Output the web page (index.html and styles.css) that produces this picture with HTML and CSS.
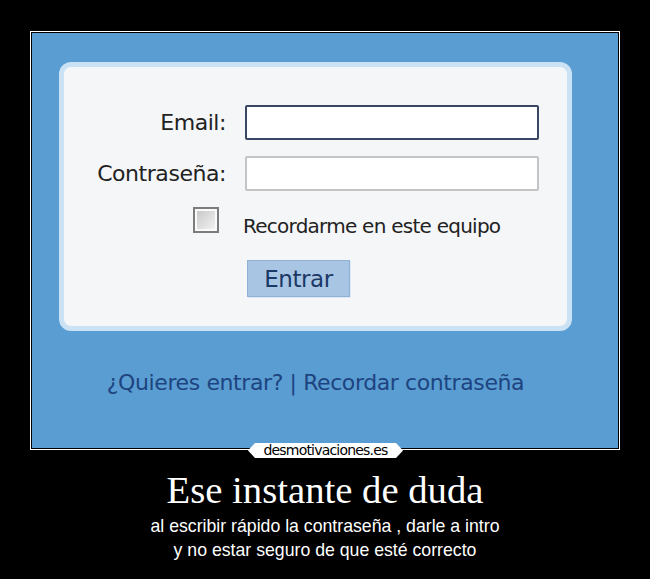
FILE: index.html
```html
<!DOCTYPE html>
<html lang="es">
<head>
<meta charset="utf-8">
<title>Ese instante de duda</title>
<link rel="stylesheet" href="styles.css">
</head>
<body>
<div class="poster">
  <div class="frame">
    <div class="shot">
      <div class="panel">
        <div class="form">
          <div class="label">Email:</div>
          <div class="input input-focus"></div>
          <div class="label">Contraseña:</div>
          <div class="input"></div>
          <div class="check-cell"><span class="checkbox"></span></div>
          <div class="check-text">Recordarme en este equipo</div>
          <div class="spacer"></div>
          <div class="button-cell"><span class="button">Entrar</span></div>
        </div>
      </div>
      <div class="links">¿Quieres entrar? | Recordar contraseña</div>
    </div>
    <div class="watermark">desmotivaciones.es</div>
  </div>
  <h1 class="title">Ese instante de duda</h1>
  <p class="sub">al escribir rápido la contraseña , darle a intro<br>y no estar seguro de que esté correcto</p>
</div>
</body>
</html>
```

FILE: styles.css
```css
html, body {
  margin: 0;
  padding: 0;
  background: #000;
}
body {
  width: 650px;
  height: 579px;
  overflow: hidden;
}
.poster {
  padding-top: 31px;
}
.frame {
  position: relative;
  margin-left: 30px;
  width: 586px;
  padding: 1px;
  border: 1px solid #fff;
  background: #000;
}
.shot {
  width: 586px;
  height: 415px;
  box-sizing: border-box;
  padding: 29px 0 0 27px;
  background: #5a9dd2;
}
.panel {
  width: 513px;
  height: 269px;
  box-sizing: border-box;
  border: 5px solid #cbe1f4;
  border-radius: 12px;
  background: #f4f6f8;
  padding-top: 38px;
}
.form {
  display: grid;
  grid-template-columns: 162px 294px;
  grid-template-rows: 35px 35px 26px 37px;
  column-gap: 19px;
  row-gap: 16px;
  font-family: "DejaVu Sans", Verdana, sans-serif;
  color: #222;
}
.label {
  align-self: center;
  text-align: right;
  font-size: 22px;
  letter-spacing: -0.45px;
}
.input {
  box-sizing: border-box;
  background: #fff;
  border: 2px solid #c4c4c4;
  border-radius: 2px;
}
.input-focus {
  border-color: #3a4664;
}
.check-cell {
  justify-self: end;
  margin-right: 7px;
}
.checkbox {
  display: block;
  width: 26px;
  height: 26px;
  box-sizing: border-box;
  border: 2px solid #7c7c7c;
  box-shadow: inset 0 0 0 2px #fafafa;
  background: linear-gradient(135deg, #c4c4c4, #f6f6f6);
}
.check-text {
  align-self: center;
  font-size: 20px;
  letter-spacing: -0.75px;
  padding-top: 12px;
  margin-left: -2px;
}
.button-cell {
  margin-top: 11px;
  padding-left: 2px;
}
.button {
  display: flex;
  align-items: center;
  justify-content: center;
  width: 103px;
  height: 37px;
  box-sizing: border-box;
  background: #a8c6e4;
  border: 1px solid #8eb1d5;
  box-shadow: 1px 1px 0 #dde8f3;
  color: #1c3866;
  font-size: 23px;
  letter-spacing: -0.4px;
}
.links {
  width: 513px;
  margin-top: 39px;
  text-align: center;
  font-family: "DejaVu Sans", Verdana, sans-serif;
  font-size: 22px;
  line-height: 26px;
  letter-spacing: -0.4px;
  color: #1d4480;
}
.watermark {
  position: absolute;
  left: 217px;
  top: 411px;
  width: 155px;
  height: 15px;
  background: #fff;
  clip-path: polygon(7px 0, calc(100% - 7px) 0, 100% 50%, calc(100% - 7px) 100%, 7px 100%, 0 50%);
  color: #000;
  font-family: "DejaVu Sans", Verdana, sans-serif;
  font-size: 14px;
  line-height: 15px;
  letter-spacing: -0.8px;
  text-align: center;
}
.title {
  margin: 18px 0 0;
  text-align: center;
  font-family: "Liberation Serif", "Times New Roman", serif;
  font-weight: normal;
  font-size: 38.7px;
  line-height: 44px;
  color: #fff;
}
.sub {
  margin: 2px 0 0;
  text-align: center;
  font-family: "Liberation Sans", Arial, sans-serif;
  font-size: 17.7px;
  line-height: 24px;
  color: #fff;
}
```
